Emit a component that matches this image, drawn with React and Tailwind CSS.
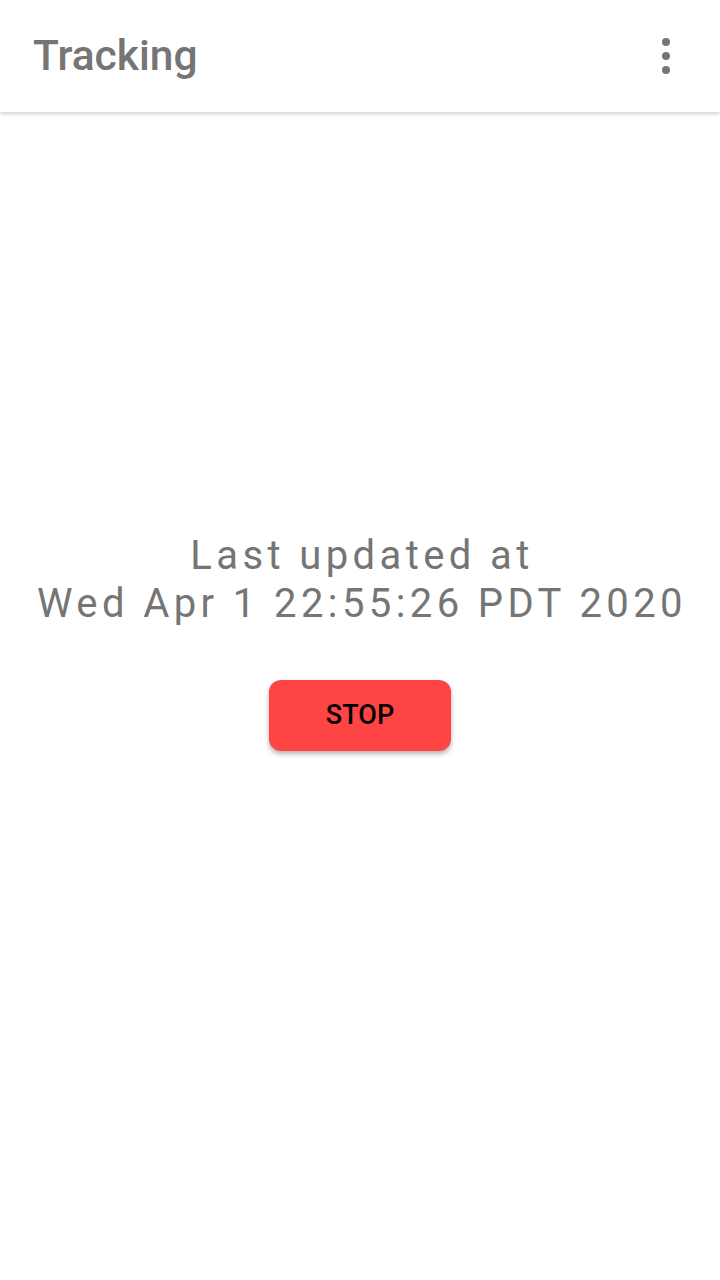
export default function App() {
  return (
    <div className="w-[720px] h-[1280px] bg-white flex flex-col" style={{ fontFamily: 'Roboto, "Noto Sans", sans-serif' }}>
      <header className="h-[112px] shrink-0 flex items-center justify-between pl-[33px] pr-[48px] bg-white shadow-[0_2px_4px_rgba(0,0,0,0.18)] relative z-10">
        <h1 className="text-[42.5px] font-medium text-[#757575] leading-none">Tracking</h1>
        <svg width="12" height="36" viewBox="0 0 12 36" className="fill-[#757575]">
          <circle cx="6" cy="4" r="4" />
          <circle cx="6" cy="18" r="4" />
          <circle cx="6" cy="32" r="4" />
        </svg>
      </header>
      <main className="flex-1 flex flex-col items-center pt-[420px]">
        <p className="text-center text-[40px] leading-[48px] tracking-[0.11em] text-[#757575] pl-[4px]">
          Last updated at
          <br />
          Wed Apr 1 22:55:26 PDT 2020
        </p>
        <button className="mt-[52px] w-[182px] h-[71px] rounded-[12px] bg-[#ff4444] text-black text-[27px] font-medium shadow-[0_3px_5px_rgba(0,0,0,0.3)]">
          STOP
        </button>
      </main>
    </div>
  );
}
